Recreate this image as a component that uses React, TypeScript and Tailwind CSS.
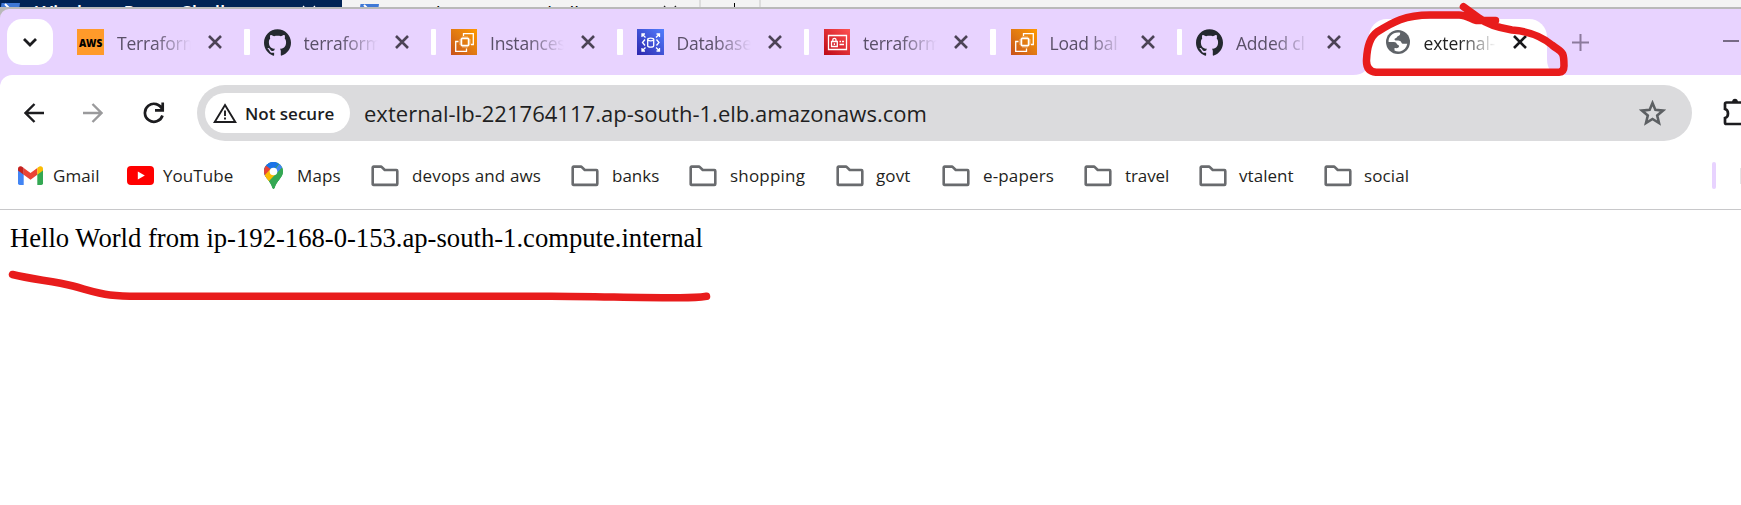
import React from "react";
import { SiGithub } from "react-icons/si";

const Close = ({ color = "#4c4356" }: { color?: string }) => (
  <svg width="14" height="14" viewBox="0 0 14 14" fill="none" stroke={color} strokeWidth="2.6">
    <path d="M1 1 13 13M13 1 1 13" />
  </svg>
);

const AwsIcon = () => (
  <span className="flex h-[26px] w-[27px] items-center justify-center bg-[#ff9a2a] pt-[2px] font-['Open_Sans',sans-serif] text-[10px] font-extrabold tracking-[-0.1px] text-black">
    AWS
  </span>
);

const Ec2Icon = () => (
  <svg width="26" height="26" viewBox="0 0 26 26" fill="none">
    <defs>
      <linearGradient id="ec2" x1="0" y1="1" x2="1" y2="0">
        <stop stopColor="#c8511b" />
        <stop offset="0.5" stopColor="#e17a12" />
        <stop offset="1" stopColor="#f90" />
      </linearGradient>
    </defs>
    <path d="M0 0H26V26H0Z" fill="url(#ec2)" />
    <g stroke="#fff" strokeWidth="1.3">
      <path d="M10.500 9.500h7v7h-7z" strokeWidth="1.5" />
      <path d="M12 9V7.500M14 9V7.500M16 9V7.500M12 18.500V17M14 18.500V17M16 18.500V17M8.500 11H10M8.500 13H10M8.500 15H10M18 11h1.500M18 13h1.500M18 15h1.500" strokeWidth=".9" />
      <path d="M12.500 7V4.700H22.300V15.500H20M7.500 12.500H4.700V22.300H15.500V19.500" />
    </g>
  </svg>
);

const RdsIcon = () => (
  <svg width="27" height="26" viewBox="0 0 27 26" fill="none">
    <defs>
      <linearGradient id="rds" x1="0" y1="1" x2="1" y2="0">
        <stop stopColor="#2e27ad" />
        <stop offset="1" stopColor="#527fff" />
      </linearGradient>
    </defs>
    <path d="M0 0H27V26H0Z" fill="url(#rds)" />
    <g stroke="#fff" strokeWidth="1.3">
      <path d="M5 8V5h3M5 5l3.500 3.500M22.500 8V5h-3M22.500 5l-3.500 3.500M5 19v3h3M5 22l3.500-3.500M22.500 19v3h-3M22.500 22l-3.500-3.500" />
      <ellipse cx="13.700" cy="10.500" rx="3" ry="1.300" />
      <path d="M10.700 10.500v6.300c0 1.800 6 1.800 6 0v-6.300M8 10.500 5.500 13.500 8 16.500M19.500 10.500l2.500 3-2.500 3" />
    </g>
  </svg>
);

const IamIcon = () => (
  <svg width="26" height="26" viewBox="0 0 26 26" fill="none">
    <defs>
      <linearGradient id="iam" x1="0" y1="1" x2="1" y2="0">
        <stop stopColor="#bd0816" />
        <stop offset="1" stopColor="#ff5252" />
      </linearGradient>
    </defs>
    <path d="M0 0H26V26H0Z" fill="url(#iam)" />
    <g stroke="#fff" strokeWidth="1.3">
      <path d="M4.500 6.500h18v14h-18z" />
      <path d="M7.500 12.500h5.800v5H7.500zM8.800 12.500v-1.700c0-2 3.200-2 3.200 0v1.700M10.400 14.300v1.700M15.500 12.500h1.500M18 12.500h2M15.500 15.500H20" />
    </g>
  </svg>
);

const GithubIcon = () => <SiGithub size={27} color="#24292f" />;

const GlobeIcon = () => (
  <svg width="24" height="24" viewBox="0 0 24 24">
    <circle cx="12" cy="12" r="12" fill="#5f6368" />
    <path
      d="M14.200 2.700c-.2 2.300-.4 2.700-2 3.200-1.700.4-1 2-2.500 2.300-1.400.3-1.500 1.500-.6 2 1.200.5 5.300-.5 6.200 2 .3 1.200 1 1.600 2.300 1.600h3.700c-.8 4-3.600 6.600-6.600 7.400-2 .5-4.400.3-6.200-.6v-2.600c2.500.4 4.200.1 4.600-1.700.2-1.600-2-1.300-2.400-2.600-.3-1.400-2.600-1.600-4-1.600H2.600C2.100 6.800 7 1.500 14.200 2.700Z"
      fill="#fff"
    />
  </svg>
);

const PsIcon = () => (
  <svg width="20" height="16" viewBox="0 0 20 16">
    <path d="M1.500 0H20L17.500 16H-1Z" fill="#3f78d6" />
    <path d="m5 1 6 6-7 6" stroke="#fff" strokeWidth="2" fill="none" />
  </svg>
);

const Folder = () => (
  <svg width="28" height="22" viewBox="0 0 28 22" fill="none" stroke="#696b6e" strokeWidth="2.6" strokeLinejoin="round">
    <path d="M1.700 2.500Q1.700 1.600 2.600 1.600H10.300L13.800 5H25.400Q26.300 5 26.300 5.900V18.900Q26.300 19.900 25.400 19.900H2.600Q1.700 19.900 1.700 18.900Z" />
  </svg>
);

const Gmail = () => (
  <svg width="25" height="19" viewBox="0 0 25 19">
    <path d="M0 3V17.300Q0 19 1.700 19H5.700V8Z" fill="#4285f4" />
    <path d="M25 3V17.300Q25 19 23.300 19H19.300V8Z" fill="#34a853" />
    <path d="M5.700 2 12.500 7 19.300 2V8.700L12.500 13.700 5.700 8.700Z" fill="#ea4335" />
    <path d="M0 3C0 0 3-.8 5.700 1.900V8.700L0 4.500Z" fill="#c5221f" />
    <path d="M25 3C25 0 22-.8 19.300 1.900V8.700L25 4.500Z" fill="#fbbc04" />
  </svg>
);

const YouTube = () => (
  <svg width="27" height="19" viewBox="0 0 27 19">
    <rect width="27" height="19" rx="4" fill="#f00" />
    <path d="m10.800 5.500 7 4-7 4Z" fill="#fff" />
  </svg>
);

const Maps = () => (
  <svg width="19" height="27" viewBox="0 0 19 27">
    <defs>
      <clipPath id="pin">
        <path d="M9.500 0C4 0 0 4.300 0 9.500c0 3.300 1.600 5.400 3.600 8C5.800 20.300 7.500 22.500 8.300 25.800Q9.500 28 10.700 25.800C11.500 22.500 13.200 20.300 15.400 17.500 17.400 14.900 19 12.800 19 9.500 19 4.300 15 0 9.500 0Z" />
      </clipPath>
    </defs>
    <g clipPath="url(#pin)">
      <path d="M0 0H19V27H0Z" fill="#34a853" />
      <path d="M-2 17 13-1H0V17Z" fill="#1a73e8" />
      <path d="M0 2 9.500 9.500 0 20Z" fill="#ea4335" />
      <path d="M4 0H16L9.500 8 2.500 3Z" fill="#1a73e8" />
      <path d="M9.500 9.500 16 1 20 4 11 14Z" fill="#4285f4" />
      <path d="M0 14 6 7.500 13 12 3.600 21H0Z" fill="#fbbc04" />
      <path d="M18 5.500 3.600 20.500 9 28H19V5Z" fill="#34a853" />
    </g>
    <circle cx="9.500" cy="9.500" r="3.800" fill="#fff" />
  </svg>
);

const tabs = [
  { icon: <AwsIcon />, title: "Terraform" },
  { icon: <GithubIcon />, title: "terraform" },
  { icon: <Ec2Icon />, title: "Instances" },
  { icon: <RdsIcon />, title: "Databases" },
  { icon: <IamIcon />, title: "terraform" },
  { icon: <Ec2Icon />, title: "Load bal" },
  { icon: <GithubIcon />, title: "Added cl" },
];

const bookmarks = [
  { icon: <Gmail />, name: "Gmail", cell: "w-[109px] gap-[10px]", text: "tracking-[0.1px]" },
  { icon: <YouTube />, name: "YouTube", cell: "w-[137px] gap-[9px]", text: "tracking-[0.05px]" },
  { icon: <Maps />, name: "Maps", cell: "w-[107px] gap-[14px]", text: "tracking-[0.1px]" },
  { icon: <Folder />, name: "devops and aws", cell: "w-[200px] gap-[13px]", text: "tracking-[0.15px]" },
  { icon: <Folder />, name: "banks", cell: "w-[118px] gap-[13px]", text: "tracking-[0px]" },
  { icon: <Folder />, name: "shopping", cell: "w-[147px] gap-[13px]", text: "tracking-[0.2px]" },
  { icon: <Folder />, name: "govt", cell: "w-[106px] gap-[12px]", text: "tracking-[0.1px]" },
  { icon: <Folder />, name: "e-papers", cell: "w-[142px] gap-[13px]", text: "tracking-[0.15px]" },
  { icon: <Folder />, name: "travel", cell: "w-[115px] gap-[13px]", text: "tracking-[-0.1px]" },
  { icon: <Folder />, name: "vtalent", cell: "w-[125px] gap-[12px]", text: "tracking-[0.05px]" },
  { icon: <Folder />, name: "social", cell: "w-[100px] gap-[12px]", text: "tracking-[0.1px]" },
];

function Terminal() {
  return (
    <div className="flex h-[9px] overflow-hidden border-b-2 border-[#b9b9b9] bg-[#f3f3f3] text-[19px] leading-[26px]">
      <div className="flex h-[9px] w-[342px] shrink-0 items-start bg-[#012456] font-semibold text-white">
        <span className="mt-[3px] w-[35px]"><PsIcon /></span>
        <span className="w-[267px] whitespace-nowrap">Windows PowerShell</span>
        <span className="mt-[5px]"><svg width="14" height="14" viewBox="0 0 14 14" stroke="#fff" strokeWidth="1.2"><path d="M1 1 13 13M13 1 1 13" /></svg></span>
      </div>
      <div className="flex h-[9px] w-[359px] shrink-0 items-start border-r-2 border-[#ddd] pl-[17px] text-black">
        <span className="mt-[4px] w-[36px]"><PsIcon /></span>
        <span className="w-[268px] whitespace-nowrap">Windows PowerShell</span>
        <span className="mt-[5px]"><svg width="14" height="14" viewBox="0 0 14 14" stroke="#222" strokeWidth="1.2"><path d="M1 1 13 13M13 1 1 13" /></svg></span>
      </div>
      <div className="flex h-[9px] w-[60px] shrink-0 justify-center border-r-2 border-[#ddd] pt-[3px] pl-[9px]">
        <span className="h-[10px] w-[1.5px] bg-black" />
      </div>
    </div>
  );
}

const fade = "[mask-image:linear-gradient(to_right,black_50%,transparent_100%)]";

function TabStrip() {
  return (
    <div className="bg-[#b9b9b9]">
      <div className="flex h-[66px] rounded-tl-[9px] bg-[#e8d3ff] pt-[10px]">
        <button className="mr-[24px] ml-[7px] flex h-[46px] w-[46px] shrink-0 items-center justify-center rounded-[15px] bg-white">
          <svg width="14" height="9" viewBox="0 0 14 9" fill="none" stroke="#1c1c1f" strokeWidth="2.800"><path d="m1 1 6 6 6-6" /></svg>
        </button>
        {tabs.map((t, i) => (
          <div key={i} className="flex h-[46px] w-[186.5px] shrink-0 items-center">
            <span className="flex w-[27px] shrink-0 justify-end">{t.icon}</span>
            <span className={`ml-[13px] w-[74px] shrink-0 overflow-hidden pt-[2px] text-[17.5px] leading-[26px] tracking-[-0.2px] whitespace-nowrap text-[#5a5068] ${fade}`}>{t.title}</span>
            <span className="ml-[17px] shrink-0"><Close /></span>
            {i < 6 && <span className="ml-[22px] h-[26px] w-[5.500px] shrink-0 rounded-[1px] bg-white" />}
          </div>
        ))}
        <div className="relative -ml-[14px] flex h-[56px] w-[178px] shrink-0 items-start rounded-t-[18px] bg-white pl-[17px]">
          <svg className="absolute bottom-0 -left-[16px]" width="16" height="16"><path d="M16 0V16H0Q16 16 16 0Z" fill="#fff" /></svg>
          <svg className="absolute -right-[16px] bottom-0" width="16" height="16"><path d="M0 0V16H16Q0 16 0 0Z" fill="#fff" /></svg>
          <div className="flex h-[46px] items-center">
            <GlobeIcon />
            <span className={`ml-[14px] w-[72px] shrink-0 overflow-hidden pt-[2px] text-[17.5px] leading-[26px] tracking-[-0.1px] whitespace-nowrap text-[#222] ${fade}`}>external-</span>
            <span className="ml-[17px] shrink-0"><Close color="#17171a" /></span>
          </div>
        </div>
        <div className="flex h-[46px] flex-1 items-center pr-[2px] pl-[25px]">
          <svg width="17" height="17" stroke="#8b7a9c" strokeWidth="2"><path d="M8.500 0V17M0 8.500H17" /></svg>
          <span className="mr-0 mb-[2px] ml-auto h-[1.500px] w-[16px] bg-[#776a85]" />
        </div>
      </div>
    </div>
  );
}

function Toolbar() {
  return (
    <div className="bg-[#e8d3ff]">
      <div className="flex h-[76px] items-start overflow-hidden rounded-tl-[12px] bg-white pt-[10px]">
        <div className="flex h-[56px] w-[197px] shrink-0 items-center pl-[24px]">
          <svg width="20" height="20" viewBox="0 0 20 20" fill="none" stroke="#1c1c1f" strokeWidth="2.400"><path d="M20 10H2M10.500 1 1.500 10l9 9" /></svg>
          <svg className="ml-[39px]" width="20" height="20" viewBox="0 0 20 20" fill="none" stroke="#9a9a9c" strokeWidth="2.400"><path d="M0 10H18M9.500 1l9 9-9 9" /></svg>
          <svg className="ml-[40px]" width="22" height="22" viewBox="0 0 22 22" fill="none" stroke="#1c1c1f" strokeWidth="2.700"><path d="M19.300 7.500A9 9 0 1 0 19.500 13.500M19.700 0.500V8.300H12" /></svg>
        </div>
        <div className="flex h-[56px] w-[1495px] shrink-0 items-center rounded-full bg-[#dbdbdd] pl-[8px]">
          <div className="flex h-[40px] w-[145px] shrink-0 items-center rounded-full bg-white pl-[8px]">
            <svg width="24" height="20" viewBox="0 0 24 20" fill="none" stroke="#1c1c1f" strokeWidth="1.900"><path d="M12 2 22.300 19H1.700ZM12 7.500V13M12 14.500V16.500" /></svg>
            <span className="ml-[8px] pt-px text-[17px] font-semibold whitespace-nowrap text-[#1c1c1f]">Not secure</span>
          </div>
          <span className="ml-[14px] pt-px text-[22px] tracking-[0.02px] whitespace-nowrap text-[#1f1f22]">external-lb-221764117.ap-south-1.elb.amazonaws.com</span>
          <svg className="mr-[26px] mb-[1px] ml-auto" width="27" height="26" viewBox="0 0 27 26" fill="none" stroke="#5d6063" strokeWidth="2.600"><path d="M13.500 3 16.400 9.900 24 10.600 18.200 15.500 20 23 13.500 19 7 23 8.800 15.500 3 10.600 10.600 9.900Z" /></svg>
        </div>
        <svg className="mt-[12px] ml-[31px] shrink-0" width="28" height="30" viewBox="0 0 28 30" fill="none" stroke="#1c1c1f" strokeWidth="2.700">
          <path d="M2 7Q2 5.500 3.500 5.500H22V27H3.500Q2 27 2 25.500V21C6 20 6 13 2 12Z" />
          <path d="M9 5C9 .5 15 .5 15 5Z" fill="#1c1c1f" stroke="none" />
        </svg>
      </div>
    </div>
  );
}

function Bookmarks() {
  return (
    <div className="flex h-[59px] items-center overflow-hidden border-b border-[#c8c8ca] bg-white pb-[9px] pl-[18px] text-[17px] text-[#1f1f22]">
      {bookmarks.map((b) => (
        <div key={b.name} className={`flex h-[30px] shrink-0 items-center ${b.cell}`}>
          <span className="shrink-0">{b.icon}</span>
          <span className={`whitespace-nowrap ${b.text}`}>{b.name}</span>
        </div>
      ))}
      <span className="ml-[288px] h-[27px] w-[3.500px] shrink-0 rounded-full bg-[#e8d3ff]" />
      <span className="ml-auto h-[16px] w-px shrink-0 bg-[#e4e4e6]" />
    </div>
  );
}

export default function App() {
  return (
    <div className="relative h-[505px] w-[1741px] overflow-hidden bg-white font-['Open_Sans',sans-serif]">
      <Terminal />
      <TabStrip />
      <Toolbar />
      <Bookmarks />
      <p className="pt-[12px] pl-[10px] font-['Liberation_Serif',serif] text-[26.65px] leading-[32px] whitespace-nowrap text-black">
        Hello World from ip-192-168-0-153.ap-south-1.compute.internal
      </p>
      <svg className="pointer-events-none absolute inset-0" width="1741" height="505" fill="none" stroke="#e81c1c" strokeWidth="7.500" strokeLinecap="round" strokeLinejoin="round">
        <path d="M12.500 274.500C32 279.500 54 281 73 286C88 290 98 293.500 110 295Q123 296.500 142 296.300H551C600 296.500 640 298 680 297.800Q697 297.800 706.500 296.300" />
        <path d="M1495.500 20.500H1476C1471 19 1466 15 1459 15H1430C1405 15 1393 22 1377 32C1370 37 1367 48 1366.500 60Q1366 71 1376 72.300H1559Q1564 72 1564 66C1564 50 1562 53 1552 45C1539 34 1525 31 1512 30C1500 28 1488 25 1479 18L1463.500 6.700" />
      </svg>
    </div>
  );
}
